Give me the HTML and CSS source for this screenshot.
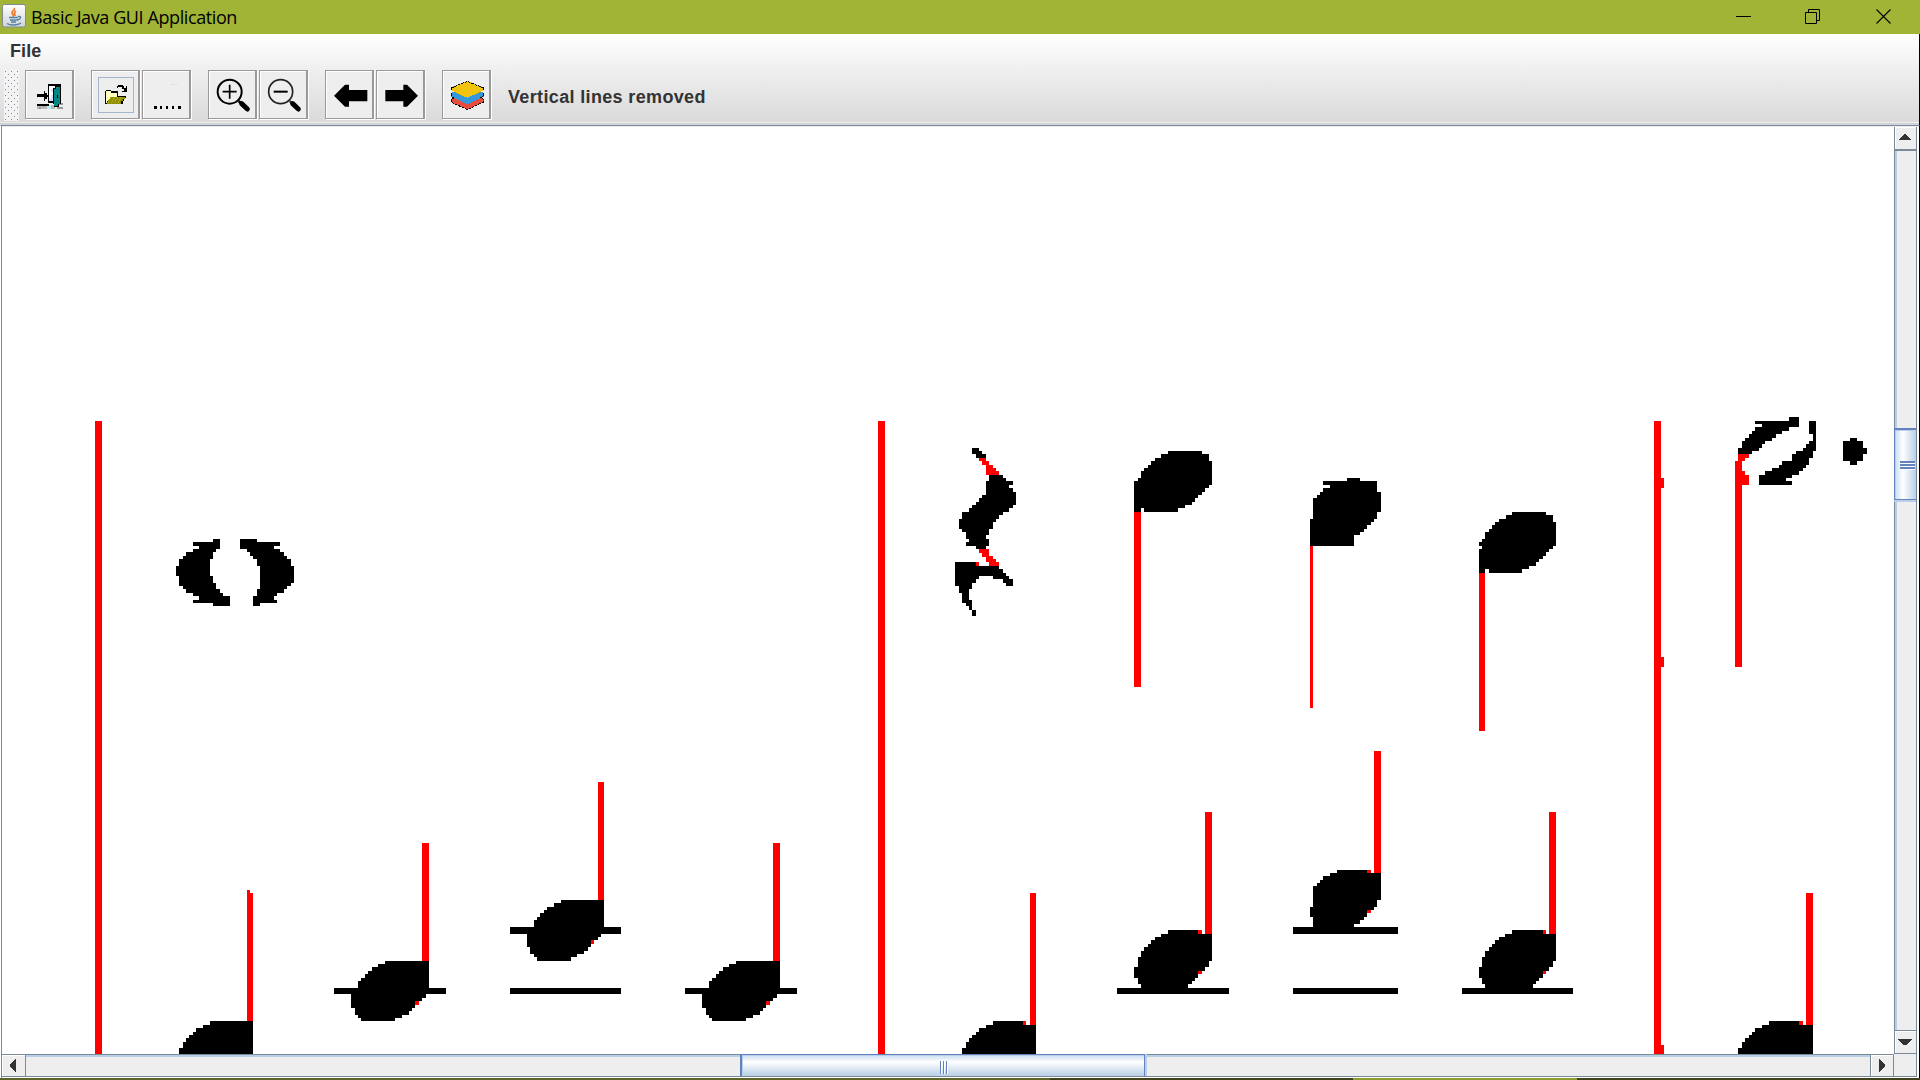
FILE: index.html
```html
<!DOCTYPE html>
<html lang="en">
<head>
<meta charset="utf-8">
<title>Basic Java GUI Application</title>
<link rel="stylesheet" href="styles.css">
</head>
<body>
<div class="window">
  <header class="titlebar">
    <svg class="app-icon" width="24" height="24" viewBox="0 0 24 24">
      <defs><linearGradient id="tile" x1="0" y1="0" x2="0" y2="1"><stop offset="0" stop-color="#fff"/><stop offset="1" stop-color="#cfd3d8"/></linearGradient></defs>
      <rect x=".5" y=".5" width="23" height="22.5" rx="2" fill="url(#tile)" stroke="#7f8c8f"/>
      <path d="M12 4c2 2-3 3-2 5s2 2 1 4M14 7c-3 2-1 3-1 5" fill="none" stroke="#ee7d2b" stroke-width="1.7"/>
      <path d="M7 13.5h9M8 16h7M9 18h5M16 12.500c4-1 3 3-1 3.500M5 19.500c3 2 11 2 14-.5" fill="none" stroke="#5682a3" stroke-width="1.4"/>
    </svg>
    <span class="title">Basic Java GUI Application</span>
    <svg class="controls" width="220" height="34" viewBox="0 0 220 34" fill="none" stroke="#000">
      <path d="M36 16.500h15M108.500 12.500V9.500h11v11h-3M105.500 12.500h11v11h-11z"/>
      <path d="M176.500 9.500l14 14M190.500 9.500l-14 14" stroke-width="1.100"/>
    </svg>
  </header>
  <div class="bars">
    <nav class="menubar"><span class="menu">File</span></nav>
    <div class="toolbar">
      <span class="grip"></span>
      <span class="tool gap">
        <svg width="48" height="48" viewBox="0 -2 144 144" shape-rendering="crispEdges">
          <path d="M36 103h54v12H36z" fill="#b8b8b8"/><path d="M42 109h6v6h-6zM54 103h6v6h-6zM90 97h24v6H90zM96 109h18v6H96z" fill="#999"/>
          <path d="M66 103h12v12H66z" fill="#b9eeee"/>
          <path d="M69 40h39v6H69zM69 40h4v54h-4zM69 91h18v6H69zM36 100h36v5H36zM36 70h20v-9h5v6h6v6h5v5h-5v6h-6v6h-5v-12H36z" fill="#000"/>
          <path d="M73 46h12v45H73z" fill="#dcdcff"/><path d="M73 46h12v9H79v9h6v9H79v9h-6z" fill="#fff"/>
          <path d="M84 52h6v-6h18v54h-6v9H87v-9h-3z" fill="#000"/><path d="M88 55h6v-6h11v51h-5v6H88z" fill="#008784"/><path d="M96 72h3v9h-3z" fill="#000"/>
        </svg>
      </span>
      <span class="tool">
        <svg width="48" height="48" viewBox="0 0 144 144" shape-rendering="crispEdges">
          <path d="M22.500 22.500h105v105h-105z" fill="none" stroke="#a3b8cc" stroke-width="3"/>
          <path d="M42 63h4v-4h14v4h21v15h24v5h-5v10h-5v10H42z" fill="#000"/><path d="M45 64h14v4h19v13H58v5h-5v7h-4v6h-4z" fill="#ffffc0"/>
          <path d="M58 81h43v5h-5v8h-5v7H47v-5h5v-7h6z" fill="#918f00"/><path d="M60 82l-10 18M70 82l-10 18M80 82l-10 18M90 82l-10 18" stroke="#bdbb31" stroke-width="2"/>
          <path d="M77 48h5v-4h13v4h5v6h5v-6h3v18H94v-4h6v-5h-6v-6H82v4h-5z" fill="#000"/>
        </svg>
      </span>
      <span class="tool gap">
        <svg width="48" height="48" viewBox="0 0 144 144" shape-rendering="crispEdges"><path d="M36 108h8v8h-8zM54 108h7v8h-7zM72 108h7v8h-7zM90 108h7v8h-7zM109 108h8v8h-8z"/><path d="M87 42h8v3h-8zM98 42h8v3h-8z" fill="#dcdcdc"/></svg>
      </span>
      <span class="tool">
        <svg width="48" height="48" viewBox="-2 -1 144 144" fill="none" stroke="#000"><circle cx="63" cy="64" r="36" stroke-width="6"/><path d="M42 64h42M63 43v42" stroke-width="5"/><path d="M90 92l10 10" stroke-width="8"/><path d="M99 100l17 16" stroke-width="15" stroke-linecap="round"/></svg>
      </span>
      <span class="tool gap">
        <svg width="48" height="48" viewBox="-2 -1 144 144" fill="none" stroke="#000"><circle cx="63" cy="64" r="36" stroke="#222" stroke-width="5"/><path d="M42 64h42" stroke-width="6"/><path d="M90 92l10 10" stroke="#333" stroke-width="7"/><path d="M99 100l17 16" stroke-width="15" stroke-linecap="round"/></svg>
      </span>
      <span class="tool">
        <svg width="48" height="48" viewBox="-3 -1 144 144"><path d="M24 76l33-33h12v16h55v34H69v16H57z"/></svg>
      </span>
      <span class="tool gap">
        <svg width="48" height="48" viewBox="-3 -1 144 144"><path d="M123 76L90 43H79v16H25v34h54v16h11z"/></svg>
      </span>
      <span class="tool">
        <svg width="48" height="48" viewBox="-1 0 144 144" shape-rendering="crispEdges" stroke="#000" stroke-width="3">
          <path d="M75 119L26 96v-8l49-22 49 22v8z" fill="#e74c3c" stroke-dasharray="8 3"/>
          <path d="M75 101L26 78v-8l49-22 49 22v8z" fill="#3498db" stroke="#3498db"/><path d="M26 70v8M124 70v8M28 80l8 4M122 80l-8 4" />
          <path d="M75 82L26 59v-5l49-20 49 20v5z" fill="#f1c40f" stroke="#f1c40f"/><path d="M26 54l49-20 49 20M26 54v6M124 54v6" fill="none" stroke-dasharray="8 3"/>
        </svg>
      </span>
      <span class="status">Vertical lines removed</span>
    </div>
  </div>
  <main class="scrollpane">
    <svg class="score" width="1892" height="927" viewBox="2 127 1892 927" shape-rendering="crispEdges">
      <!-- bar lines -->
      <path class="stem" d="M95 421h7v633h-7zM878 421h7v633h-7zM1654 421h7v57h3v10h-3v169h3v10h-3v378h3v9h-10z"/>
      <!-- whole note -->
      <g transform="translate(160 520) scale(.333333)">
        <path d="M159 57H180V87H168V96H159V117H150V168H159V189H168V207H180V219H189V228H210V258H159V249H99V240H117V228H99V219H78V207H69V198H57V168H48V138H57V117H69V108H78V96H99V87H117V78H99V66H159Z"/>
        <path d="M240 57H291V66H360V78H342V87H360V96H372V108H381V117H393V138H402V189H393V198H381V207H372V219H351V228H342V240H351V249H300V258H279V228H291V207H300V138H291V117H279V108H270V96H261V87H240Z"/>
      </g>
      <!-- quarter rest -->
      <g transform="translate(930 430) scale(.333333)">
        <path d="M126 54H147V63H156V72H168V84H138V72H126Z"/>
        <path class="stem" d="M147 84H168V93H177V105H189V114H198V123H207V135H168V105H156V93H147Z"/>
        <path d="M177 135H219V144H228V153H249V165H237V174H249V186H258V225H249V234H237V246H219V255H207V267H198V276H189V297H177V315H168V327H177V348H168V357H138V348H108V336H117V327H108V306H96V297H87V267H96V246H117V234H126V225H138V216H147V204H156V195H168V153H177Z"/>
        <path class="stem" d="M147 357H177V378H189V387H198V396H207V408H177V396H168V381H156V369H147ZM138 396h9v12h-9z"/>
        <path d="M75 396H138V408H207V417H219V429H228V438H237V447H249V468H228V459H219V447H189V438H147V447H138V459H126V477H117V510H126V540H117V528H108V519H96V489H87V468H75ZM126 540h12v18h-12z"/>
      </g>
      <!-- upper voice, stems down -->
      <g transform="translate(1110 430) scale(.333333)">
        <path d="M174 63H276V72H297V93H306V165H297V174H285V186H276V195H264V204H255V216H246V225H225V234H204V246H102V234H93V246H72V153H84V144H93V123H102V114H114V105H123V93H135V84H153V72H174Z"/>
        <path d="M711 144H750V153H801V186H813V246H801V267H792V276H783V285H771V297H762V306H750V315H732V348H600V267H609V204H621V195H630V186H639V174H660V165H639V153H711Z"/>
        <path d="M1206 246H1308V255H1329V276H1338V348H1329V357H1317V366H1308V378H1299V387H1287V396H1278V408H1257V417H1236V429H1137V417H1125V429H1107V357H1116V348H1107V336H1116V327H1125V306H1137V297H1146V285H1155V276H1167V267H1188V255H1206Z"/>
        <path class="stem" d="M72 246h21v525h-21zM600 348h9v486h-9zM1107 429h18v474h-18z"/>
      </g>
      <!-- dotted half note -->
      <g transform="translate(1640 400) scale(.333333)">
        <path d="M345 63H447V51H477V81H447V93H426V102H408V114H396V123H375V132H366V144H357V153H336V162H294V144H306V123H315V114H327V102H336V93H345V81H366V72H345Z"/>
        <path d="M507 63H528V153H519V174H507V195H498V204H489V213H477V225H456V234H438V243H456V255H357V225H375V213H396V204H417V195H426V183H456V162H468V153H489V144H498V132H507V123H519V102H507Z"/>
        <path class="stem" d="M294 162H327V174H315V183H306V213H315V225H327V255H306V801H285V183H294Z"/>
        <path d="M630 114H651V123H669V144H681V162H669V183H651V195H630V183H609V123H630Z"/>
      </g>
      <!-- lower voice, first measure -->
      <g transform="translate(0 880) scale(.333333)">
        <path d="M630 423H759V522H537V504H549V486H558V474H567V465H579V456H588V444H609V435H630Z"/>
        <path d="M1155 243H1287V324H1338V342H1278V354H1266V363H1245V384H1236V393H1227V405H1206V414H1185V423H1083V414H1074V405H1065V384H1053V342H1002V324H1074V303H1083V294H1095V282H1104V273H1116V261H1134V252H1155Z"/>
        <path class="stem" d="M741 30H750V39H759V423H741ZM1266 -111h21v354h-21zM1245 363h12v12h-12z"/>
      </g>
      <g transform="translate(500 770) scale(.333333)">
        <path d="M183 390H312V471H363V492H303V501H294V510H273V531H264V543H252V552H231V561H213V573H111V561H102V552H90V531H81V492H30V471H102V450H111V441H120V429H132V420H141V411H162V399H183ZM30 654h333v18h-333z"/>
        <path d="M708 573H840V654H891V672H831V684H819V693H798V714H789V723H780V735H759V744H738V753H636V744H627V735H618V714H606V672H555V654H627V633H636V624H648V612H657V603H669V591H687V582H708Z"/>
        <path class="stem" d="M294 36h18v354h-18zM273 510h9v12h-9zM819 219h21v354h-21zM798 693h12v12h-12z"/>
      </g>
      <!-- lower voice, second measure -->
      <g transform="translate(920 740) scale(.433673 .333333)">
        <path d="M168 843H238V855H267V942H97V924H106V906H113V894H120V885H129V876H136V864H152V855H168Z"/>
        <path d="M572 570H641V582H673V663H666V681H657V693H641V714H634V723H627V732H618V744H713V762H454V744H510V732H503V714H493V681H503V651H510V633H517V621H526V612H533V600H542V591H556V582H572Z"/>
        <path d="M962 390H1031V399H1063V480H1054V501H1047V510H1031V531H1024V540H1015V552H1001V561H1102V582H860V561H906V531H899V501H906V438H915V429H922V420H929V408H945V399H962ZM860 744h242v18h-242z"/>
        <path d="M1365 570H1437V582H1467V663H1460V681H1450V693H1437V714H1427V723H1420V732H1414V744H1506V762H1250V744H1303V732H1296V714H1289V681H1296V651H1303V633H1312V621H1319V612H1326V600H1335V591H1349V582H1365Z"/>
        <path class="stem" d="M254 459h13v396h-13zM238 843h6v12h-6zM657 216h16v366h-16zM641 570h9v12h-9zM641 693h9v9h-9zM1047 33h16v366h-16zM1031 390h9v9h-9zM1031 510h9v9h-9zM1450 216h17v366h-17zM1437 570h6v12h-6zM1437 693h6v9h-6z"/>
      </g>
      <!-- lower voice, third measure -->
      <g transform="translate(1640 880) scale(.333333)">
        <path d="M387 423H477V435H519V522H294V504H306V486H315V474H327V465H336V456H345V444H366V435H387Z"/>
        <path class="stem" d="M498 39h21v396h-21zM477 423h12v12h-12z"/>
      </g>
    </svg>
    <div class="vscroll">
      <span class="arrow up"><svg width="12" height="6" viewBox="0 0 12 6" shape-rendering="crispEdges"><path d="M5 0h2v1h1v1h1v1h1v1h1v1h1v1H0V5h1V4h1V3h1V2h1V1h1z"/></svg></span>
      <span class="vtrack"><span class="vthumb"><i class="vgrip"></i></span></span>
      <span class="arrow down"><svg width="14" height="6" viewBox="0 0 14 6" shape-rendering="crispEdges"><path d="M0 0h14v1h-1v1h-1v1h-1v1h-1v1H9v1H5V5H4V4H3V3H2V2H1V1H0z"/></svg></span>
    </div>
    <div class="hscroll">
      <span class="arrow left"><svg width="6" height="13" viewBox="0 0 6 13" shape-rendering="crispEdges"><path d="M6 0v13H5v-1H4v-1H3v-1H2V9H1V8H0V5h1V4h1V3h1V2h1V1h1V0z"/></svg></span>
      <span class="htrack"><span class="hthumb"><i class="hgrip"></i></span></span>
      <span class="arrow right"><svg width="6" height="13" viewBox="0 0 6 13" shape-rendering="crispEdges"><path d="M0 0v13h1v-1h1v-1h1v-1h1V9h1V8h1V5H5V4H4V3H3V2H2V1H1V0z"/></svg></span>
    </div>
    <div class="corner"></div>
  </main>
  <footer class="desktop-edge"></footer>
</div>
</body>
</html>
```
FILE: styles.css
```css
* { box-sizing: border-box; }
body { margin: 0; width: 1920px; height: 1080px; overflow: hidden; background: #fff; }
svg { display: block; }
.window { display: flex; flex-direction: column; width: 1920px; height: 1080px; }

.titlebar { display: flex; align-items: center; height: 34px; padding-left: 2px; background: #a1b436; }
.app-icon { margin-top: -2px; }
.title { margin-left: 5px; font: 18px/34px "Open Sans", "Noto Sans", sans-serif; letter-spacing: -0.4px; color: #000; white-space: nowrap; }
.controls { margin-left: auto; }

.bars { height: 91px; border-right: 1px solid #000; background: linear-gradient(#fff 0, #ebebeb 50%, #dadada 88px, #eee 88px, #eee 89px, #ccc 89px, #d4dae0 91px); }
.menubar { height: 36px; padding-left: 10px; }
.menu, .status { font: bold 18px/34px "Liberation Sans", Arial, sans-serif; letter-spacing: 0.1px; color: #333; white-space: nowrap; }
.toolbar { display: flex; align-items: flex-start; height: 52px; padding-left: 4px; }
.grip {
  width: 15px; height: 51px; margin-right: 6px;
  background:
    radial-gradient(circle at 1.500px 1.500px, #7a8a99 0.800px, transparent 1px) 0 0 / 6px 6px,
    radial-gradient(circle at 4.500px 4.500px, #7a8a99 0.800px, transparent 1px) 0 0 / 6px 6px,
    #f3f3f3;
}
.tool { width: 49px; height: 49px; margin-right: 2px; border: 1px solid #999; border-right-width: 2px; background: #eee; box-shadow: 1px 1px 0 #fff, inset 1px 1px 0 #fff; }
.tool svg { margin: -1px 0 0 -1px; }
.tool.gap { margin-right: 17px; }
.status { margin-left: 15px; line-height: 54px; letter-spacing: 0.35px; }

.scrollpane {
  display: grid; grid-template-columns: 1892px 23px; grid-template-rows: 927px 23px;
  height: 953px; padding: 1px 0 0 1px;
  border: solid #7a8a99; border-width: 1px 1px 0 1px; border-left-color: #fff; border-right-color: #000;
  background: #fff; box-shadow: inset 1px 0 0 #7a8a99, inset 0 1px 0 #eee;
}
.stem { fill: #f00; }
.arrow { display: flex; align-items: center; justify-content: center; background: #eee; box-shadow: inset 1px 1px 0 #fff; fill: #333; }

.vscroll { display: flex; flex-direction: column; border-left: 1px solid #7a8a99; border-right: 1px solid #7a8a99; }
.up { height: 24px; padding: 0 2px 2px 0; border-bottom: 2px solid #7a8a99; }
.down { height: 24px; padding-right: 1px; border-top: 1px solid #7a8a99; border-bottom: 1px solid #7a8a99; }
.vtrack { height: 879px; padding-top: 277px; border-left: 2px solid #b8cfe5; background: #eee; }
.vthumb { display: flex; height: 72px; margin-left: -3px; padding: 31px 0 0 5px; border: solid #6382bf; border-width: 2px 0 1px 1px; background: linear-gradient(90deg, #c8ddf2, #fff 8px, #b8cfe5); box-shadow: inset 1px 1px 0 #b8cfe5, 0 2px 0 #b8cfe5; }
.vgrip { width: 15px; height: 9px; background: repeating-linear-gradient(#6382bf 0 2px, #fff 2px 3px); }

.hscroll { display: flex; height: 23px; border-top: 1px solid #7a8a99; border-bottom: 1px solid #7a8a99; }
.left { width: 24px; padding-right: 2px; border-right: 1px solid #7a8a99; }
.right { width: 24px; border-left: 1px solid #7a8a99; border-right: 1px solid #7a8a99; }
.htrack { width: 1844px; padding-left: 714px; border-top: 2px solid #b8cfe5; background: #eee; }
.hthumb { display: block; width: 405px; height: 22px; margin-top: -3px; padding: 6px 0 0 198px; border: solid #6382bf; border-width: 1px 1px 0 2px; background: linear-gradient(#c8ddf2, #fff 7px, #b8cfe5); box-shadow: inset 1px 1px 0 #b8cfe5, 2px 0 0 #b8cfe5; }
.hgrip { display: block; width: 9px; height: 13px; background: repeating-linear-gradient(90deg, #6382bf 0 1px, #fff 1px 2px, transparent 2px 3px); }
.corner { height: 23px; background: #eee; border-right: 1px solid #7a8a99; border-bottom: 1px solid #7a8a99; }

.desktop-edge { height: 2px; background: linear-gradient(90deg, #5c6426 1050px, #3f421a 1050px 1353px, #8d9c2c 1353px 1577px, #3f421a 1577px); }
```
